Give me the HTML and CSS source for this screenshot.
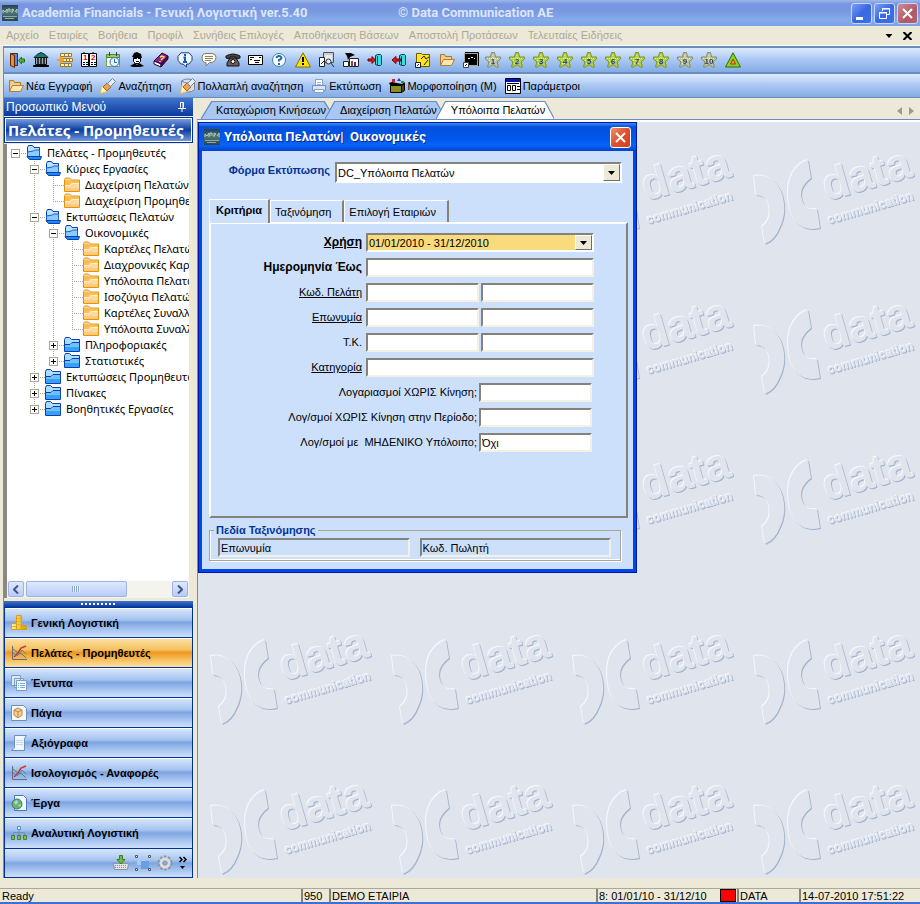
FILE: index.html
```html
<!DOCTYPE html>
<html lang="el">
<head>
    <meta charset="UTF-8">
    <title>Academia Financials</title>
    <link rel="stylesheet" href="styles.css">
</head>
<body>
    <!-- Shared icons -->
    <svg class="defs" aria-hidden="true">
        <linearGradient id="g-app" x2="0" y2="1"><stop offset="0" stop-color="#25434d"/><stop offset=".5" stop-color="#4f7474"/><stop offset="1" stop-color="#2b4247"/></linearGradient>
        <linearGradient id="g-gold"><stop offset="0" stop-color="#fff2a0"/><stop offset=".5" stop-color="#f7c93a"/><stop offset="1" stop-color="#c88a12"/></linearGradient>
        <symbol id="i-app" viewBox="0 0 16 16">
            <path fill="url(#g-app)" d="M0 0h16v16H0z"/>
            <path stroke="#b8ccc8" fill="none" d="M1 8V5l2 2 2-3v4M6 7V4h2v3M10 8V4l2 1-2 2M13 7l2-3v4"/>
            <path stroke="#8fa9a7" fill="none" d="M1 11.500h14M3 13.500h9"/>
        </symbol>
        <symbol id="i-open" viewBox="0 0 16 16">
            <path fill="#b9e2ff" stroke="#0b3fae" d="M1.500 12.500v-10l1-2h4l1.500 2h5.500v9"/>
            <path fill="#8ccbff" stroke="#1c5cd0" d="M1.500 12V7l6-1 1-1h5v7z"/>
            <path fill="#1d8cf0" stroke="#0b3fae" d="M1 11.500h14.500l-1 3H3.500z"/>
        </symbol>
        <symbol id="i-closed" viewBox="0 0 16 16">
            <path fill="#a9dcff" stroke="#0b3fae" d="M.5 14.500v-12l1-2h4l2 2h8v12z"/>
            <path fill="#37a2f7" d="M1 10h14v4H1z"/>
            <path fill="#6fc0fb" d="M1 8h6l1-2h7v4H1z"/>
            <path stroke="#0b3fae" fill="none" d="M1 7.500h5l2-2h7"/>
        </symbol>
        <symbol id="i-leaf" viewBox="0 0 16 16">
            <path fill="#ffd9a0" stroke="#e0930c" d="M.5 14.500v-12l1-1.500h4l2 2h8v11.500z"/>
            <path fill="#ffbb50" d="M1 3h4l3 1h7v2H7L6 8H1z"/>
            <path fill="none" stroke="#fff6c4" d="M1 8.500h5l2-2h7"/>
            <path fill="#ffc978" d="M1 11h14v3H1z"/>
        </symbol>
        <symbol id="i-folder" viewBox="0 0 16 16">
            <path fill="#f2cd84" stroke="#a87830" d="M1.500 13.500v-11h4l1 2h6v3"/>
            <path fill="#fbe5b0" stroke="#b27f35" d="M1.500 13.500l3-6h11l-3 6z"/>
        </symbol>
        <symbol id="i-torch" viewBox="0 0 16 16">
            <path fill="#fff3c0" stroke="#e7b860" d="M.5 15.500l1-8 6 6z"/>
            <path fill="#e9a24e" stroke="#a56a2a" d="M3 9l4-4 4 4-4 4z"/>
            <path fill="#e8ecf4" stroke="#74819c" d="M7.500 5.500l5-5 3 3-5 5z"/>
        </symbol>
        <symbol id="i-star" viewBox="0 0 16 16">
            <path fill="#b5d048" stroke="#7a9426" d="M6.500.500h3l1 4.500h5v2l-3.500 3 1.500 5h-2L8 12.500 4.500 15h-2L4 10 .5 7V5h5z"/>
            <path stroke="#e0ee90" fill="none" stroke-dasharray="1 1" d="M8 3v9M2 6.500h12M4 8.500h8M5 11.500h6"/>
        </symbol>
        <symbol id="i-chart" viewBox="0 0 16 16">
            <path fill="none" stroke="#666c88" d="M1.500 1v13.500H16"/>
            <path fill="none" stroke="#3d9c50" d="M2 4l5 4 4 1 4 4"/>
            <path fill="none" stroke="#d0342c" stroke-width="1.500" d="M3 12l4-4 3-5 5-2"/>
            <path fill="none" stroke="#5582d2" d="M2 8l4 3 5-6 4 4"/>
        </symbol>
        <symbol id="i-arrow" viewBox="0 0 7 4"><path d="M0 0h7L3.500 4z"/></symbol>
    </svg>

    <header class="titlebar">
        <svg class="icon"><use href="#i-app"/></svg>
        <h1>Academia Financials - Γενική Λογιστική ver.5.40</h1>
        <span class="copyright">© Data Communication AE</span>
        <div class="window-buttons">
            <button aria-label="Minimize"><svg viewBox="0 0 19 19"><path fill="#fff" d="M4 13h7v3H4z"/></svg></button>
            <button aria-label="Restore"><svg viewBox="0 0 19 19"><path fill="none" stroke="#fff" d="M7.500 7V4.500h7v6H12M4.500 8.500h7v6h-7z"/><path stroke="#fff" d="M7 5h8M4 9h8"/></svg></button>
            <button class="close" aria-label="Close"><svg viewBox="0 0 19 19"><path stroke="#fff" stroke-width="2" d="M5 5l9 9M14 5l-9 9"/></svg></button>
        </div>
    </header>

    <nav class="menubar">
        <a href="#">Αρχείο</a>
        <a href="#">Εταιρίες</a>
        <a href="#">Βοήθεια</a>
        <a href="#">Προφίλ</a>
        <a href="#">Συνήθεις Επιλογές</a>
        <a href="#">Αποθήκευση Βάσεων</a>
        <a href="#">Αποστολή Προτάσεων</a>
        <a href="#">Τελευταίες Ειδήσεις</a>
        <div class="menu-buttons">
            <button aria-label="Options"><svg width="8" height="4" viewBox="0 0 7 4"><use href="#i-arrow"/></svg></button>
            <button aria-label="Close window"><svg width="9" height="8" viewBox="0 0 9 8"><path stroke="#000" stroke-width="2" d="M.5 0l8 8M8.500 0l-8 8"/></svg></button>
        </div>
    </nav>

    <div class="toolbar">
        <div class="tool-group">
            <button aria-label="Exit"><svg class="icon" viewBox="0 0 16 16"><path fill="#5b88dc" stroke="#642800" d="M1.500 1.500h7v12h-7z"/><path fill="#e09040" stroke="#642800" d="M1.500 1.500l4 2v12l-4-2z"/><path fill="#58b030" stroke="#20701a" d="M15.500 7v3h-3v2l-3-3.500 3-3.500v2z"/></svg></button>
            <button aria-label="Company"><svg class="icon" viewBox="0 0 16 16"><path fill="#157b78" stroke="#00282a" d="M1 5.500l3-3L8 .5l4 2 3 3z"/><path fill="#9aa7b4" stroke="#111" d="M2.500 5.500h11v7h-11z"/><path stroke="#111" stroke-width="1.500" d="M5 6v7M8 6v7M11 6v7"/><path fill="#333" stroke="#000" d="M.5 13.500h15v1H.5z"/></svg></button>
            <button aria-label="Records"><svg class="icon" viewBox="0 0 16 16"><path fill="#fff3b0" stroke="#a07828" d="M3.500 1.500h11v3h-11zM5.500 6.500h10v3h-10zM3.500 11.500h11v3h-11z"/><path stroke="#a07828" d="M7.500 1v3M11.500 1v3M9.500 7v3M12.500 7v3M7.500 12v3M11.500 12v3"/><path stroke="#f0a020" stroke-width="2" d="M0 8h6M3 5l3 3-3 3" fill="none"/></svg></button>
            <button aria-label="Calendar"><svg class="icon" viewBox="0 0 16 16"><path fill="#fff" stroke="#000" d="M.5 1.500h7v13h-7zM8.500 1.500h7v13h-7z"/><text class="glyph red" x="2" y="8">1</text><text class="glyph red" x="10" y="8">2</text><path stroke="#000" stroke-dasharray="2 1" d="M2 10.500h5M2 12.500h5M10 10.500h5M10 12.500h5M3 0v3M12 0v3"/></svg></button>
            <button aria-label="Schedule"><svg class="icon" viewBox="0 0 16 16"><path fill="#fff" stroke="#6da63a" d="M1.500 3.500h13v11h-13z"/><path fill="#9ccc60" stroke="#4b8a2a" d="M1.500 2.500h13v3h-13z"/><path stroke="#345" d="M4.500 0v4M11.500 0v4"/><circle cx="9.500" cy="10" r="4.500" fill="#e6f3ff" stroke="#2c6db4"/><path stroke="#2c6db4" fill="none" d="M9.500 7v3.500H12"/></svg></button>
            <button aria-label="Agent"><svg class="icon" viewBox="0 0 16 16"><path d="M3 5l2-4 3-1 4 2 1 4z"/><path fill="#fff" stroke="#000" d="M4.500 5.500h7v4l-2 2h-3l-2-2z"/><path stroke="#000" d="M5 6.500h3M9 6.500h2M7 9.500h3"/><path d="M1 14l5-3 2 2 2-2 5 3-4 1H4z"/></svg></button>
            <button aria-label="Help book"><svg class="icon" viewBox="0 0 16 16"><path fill="#90208c" stroke="#26002c" d="M1 9l8-8 6 3-7 8z"/><path fill="#fff" stroke="#26002c" d="M1 9v3l7 3v-3z"/><path fill="#5b0b5a" stroke="#26002c" d="M8 12l7-8v3l-7 8z"/><path stroke="#ffe14a" stroke-width="1.500" fill="none" d="M7 5l2-1 2 1-2 2-1 1M7 9v1"/></svg></button>
            <button aria-label="Information"><svg class="icon" viewBox="0 0 16 16"><path fill="#eff6ff" stroke="#25406e" d="M4 .8h8l3 3.500v4L12 12H9.500v3L6 12H4L1 8.300v-4z"/><path fill="none" stroke="#0a5fc0" stroke-width="2" d="M8 2v2M6.500 5.500H8V10M6 10h4"/></svg></button>
            <button aria-label="Comment"><svg class="icon" viewBox="0 0 16 16"><path fill="#fffdf0" stroke="#807d68" d="M5 1.500h6q4 0 4 4t-4 5H8.500L5 14v-3.500q-4 0-4-4.500t4-4.500z"/><path stroke="#8a8770" d="M4 4.500h8M4 6.500h8M4 8.500h6"/></svg></button>
            <button aria-label="Phone"><svg class="icon" viewBox="0 0 16 16"><path fill="#4e433e" stroke="#111" d="M1 6V4q7-4 14 0v2l-4 1V5H5v2z"/><path fill="#6b5d55" stroke="#111" d="M5 6h6l3 5v3H2v-3z"/><circle cx="8" cy="9.500" r="2" fill="#fff" stroke="#111"/></svg></button>
        </div>
        <div class="tool-group">
            <button aria-label="Mail"><svg class="icon" viewBox="0 0 16 16"><path fill="#fff" stroke="#000" d="M1.500 3.500h14v9h-14z"/><path stroke="#000" d="M3 5.500h4M3 7.500h2M7 8.500h6M8 10.500h4M12 5.500h2"/></svg></button>
            <button aria-label="Help"><svg class="icon" viewBox="0 0 16 16"><circle cx="8" cy="8" r="6.500" fill="#f8fcff" stroke="#3f7fb0"/><path fill="none" stroke="#2269a8" stroke-width="2" d="M5.500 6Q6 4 8 4t2.500 2Q10 7.500 8 8v1.500M8 11v2"/></svg></button>
            <button aria-label="Warning"><svg class="icon" viewBox="0 0 16 16"><path fill="#ffe10a" stroke="#8a6a00" d="M8 .8L15.500 15H.5z"/><path stroke="#000" stroke-width="2" d="M8 5v5M8 11v2"/></svg></button>
            <button aria-label="Search window"><svg class="icon" viewBox="0 0 16 16"><path fill="#c8ccd4" stroke="#555" d="M4.500.5h10v10h-10z"/><path fill="#e8eaee" d="M6 3h7v6H6z"/><path fill="#fff" stroke="#222" d="M.5 5.500h5v9h-5z"/><path stroke="#222" d="M2 12l3-3M11 10l4 5"/><circle cx="9.500" cy="9.500" r="2.500" fill="#dcecff" stroke="#333"/></svg></button>
            <button aria-label="Statistics"><svg class="icon" viewBox="0 0 16 16"><path d="M2 1h6l4 2-5 2-2 3-1-4z"/><path fill="#fff" stroke="#222" d="M6.500 6.500h9v8h-9z"/><path stroke="#d03020" stroke-width="2" d="M9 9v5"/><path stroke="#2040d0" stroke-width="2" d="M12 10v4"/><path fill="#fff" stroke="#222" d="M.5 9.500h5v5h-5z"/></svg></button>
            <button aria-label="Import"><svg class="icon" viewBox="0 0 16 16"><path fill="#30e0e8" stroke="#003c40" d="M8.500 3.500l2-1h3l1 1v9l-1 1h-3l-2-1z"/><path stroke="#003c40" d="M10.500 4v9"/><path fill="#e01818" stroke="#700" d="M1 7h4V4.500L8.500 8 5 11.500V9H1z"/></svg></button>
            <button aria-label="Export"><svg class="icon" viewBox="0 0 16 16"><path fill="#30e0e8" stroke="#003c40" d="M8.500 3.500l2-1h3l1 1v9l-1 1h-3l-2-1z"/><path stroke="#003c40" d="M10.500 4v9"/><path fill="#e01818" stroke="#700" d="M10 7H5V4.500L1 8l4 3.500V9h5z"/></svg></button>
            <button aria-label="Notes"><svg class="icon" viewBox="0 0 16 16"><path fill="#ffe320" stroke="#6c5d00" d="M1.500 1.500h5l1 1h7v12h-13z"/><path stroke="#222" fill="none" d="M6 7l3-3 2 3 3-2M9 13l4-5"/><path fill="#fff" stroke="#222" d="M.5 10.500h5v5h-5z"/><path stroke="#222" d="M2 14l2-2"/></svg></button>
            <button aria-label="Open"><svg class="icon"><use href="#i-folder"/></svg></button>
            <button aria-label="Console"><svg class="icon" viewBox="0 0 16 16"><path stroke="#a8a8a8" fill="#000" d="M1.500 1.500h13v12h-13z"/><path stroke="#000" fill="none" d="M2 .5h13.500V14"/><path stroke="#fff" d="M5 6.500h2M8 5.500h2M11 6.500h1"/><path fill="#fff" stroke="#444" d="M.5 10.500h5v5h-5z"/><path stroke="#222" d="M2 14l2-2"/></svg></button>
        </div>
        <div class="tool-group">
            <button aria-label="Favourite 1"><svg class="icon faded" viewBox="0 0 16 16"><use href="#i-star"/><text class="glyph" x="8" y="12">1</text></svg></button>
            <button aria-label="Favourite 2"><svg class="icon" viewBox="0 0 16 16"><use href="#i-star"/><text class="glyph" x="8" y="12">2</text></svg></button>
            <button aria-label="Favourite 3"><svg class="icon" viewBox="0 0 16 16"><use href="#i-star"/><text class="glyph" x="8" y="12">3</text></svg></button>
            <button aria-label="Favourite 4"><svg class="icon" viewBox="0 0 16 16"><use href="#i-star"/><text class="glyph" x="8" y="12">4</text></svg></button>
            <button aria-label="Favourite 5"><svg class="icon" viewBox="0 0 16 16"><use href="#i-star"/><text class="glyph" x="8" y="12">5</text></svg></button>
            <button aria-label="Favourite 6"><svg class="icon" viewBox="0 0 16 16"><use href="#i-star"/><text class="glyph" x="8" y="12">6</text></svg></button>
            <button aria-label="Favourite 7"><svg class="icon" viewBox="0 0 16 16"><use href="#i-star"/><text class="glyph" x="8" y="12">7</text></svg></button>
            <button aria-label="Favourite 8"><svg class="icon" viewBox="0 0 16 16"><use href="#i-star"/><text class="glyph" x="8" y="12">8</text></svg></button>
            <button aria-label="Favourite 9"><svg class="icon faded" viewBox="0 0 16 16"><use href="#i-star"/><text class="glyph" x="8" y="12">9</text></svg></button>
            <button aria-label="Favourite 10"><svg class="icon faded" viewBox="0 0 16 16"><use href="#i-star"/><text class="glyph" x="8" y="12">10</text></svg></button>
            <button aria-label="Alerts"><svg class="icon" viewBox="0 0 16 16"><path fill="#8fd21c" stroke="#2f6a10" d="M8 .8L15.500 15H.5z"/><path fill="#f5a030" stroke="#9c3a10" d="M8 7l2.500 5h-5z"/></svg></button>
        </div>
    </div>

    <div class="toolbar actions">
        <button><svg class="icon"><use href="#i-folder"/></svg>Νέα Εγγραφή</button>
        <button><svg class="icon"><use href="#i-torch"/></svg>Αναζήτηση</button>
        <button><svg class="icon" viewBox="0 0 16 16"><path fill="#d9dde4" stroke="#7d8696" d="M1.500 3q6-4 13 0v9q-6 4-13 0z"/><path stroke="#7d8696" fill="none" d="M1.500 3q6 4 13 0"/><use href="#i-torch"/></svg>Πολλαπλή αναζήτηση</button>
        <button><svg class="icon" viewBox="0 0 16 16"><path fill="#fff" stroke="#7fa0d0" d="M4.500 1.500h7v7h-7z"/><path fill="#d8e4f4" stroke="#6f8fc0" d="M1.500 7.500h13v5h-13z"/><path fill="#fff" stroke="#7fa0d0" d="M3.500 11.500h9v3h-9z"/><path stroke="#9ab4dc" d="M6 4.500h4M6 6.500h4"/></svg>Εκτύπωση</button>
        <button><svg class="icon" viewBox="0 0 16 16"><path fill="#8c8c20" stroke="#000" d="M1.500 7.500h11v7h-11z"/><path fill="#4b4b0c" stroke="#000" d="M12.500 7.500l3-2v7l-3 2z"/><path fill="#000" d="M0 5l3-1 10 2 3-2-1 3H1z"/><path fill="#e02020" d="M3 1h3v3H3z"/><path fill="#2030d0" d="M8 3l2-3 2 3z"/><path fill="#18a030" d="M12 3h3v2h-3z"/></svg>Μορφοποίηση (Μ)</button>
        <button><svg class="icon" viewBox="0 0 16 16"><path fill="#fff" stroke="#000" d="M.5.5h15v15H.5z"/><path fill="#0814b8" d="M1 1h14v3H1z"/><path fill="none" stroke="#000" d="M2.500 7.500h3v5h-3zM7.500 7.500h3v5h-3zM12 8.500h3M12 11.500h3M2 5.500h12"/></svg>Παράμετροι</button>
    </div>

    <div class="main">
        <aside class="sidebar">
            <div class="sidebar-head">
                <span>Προσωπικό Μενού</span>
                <button aria-label="Pin"><svg width="8" height="10" viewBox="0 0 8 10"><path fill="none" stroke="#fff" d="M2.500 5.500v-5h3v5M0 6.500h8M4 6.500V10M5 1v5"/></svg></button>
            </div>
            <h2>Πελάτες - Προμηθευτές</h2>

            <div class="tree-frame">
                <ul class="tree">
                    <li>
                        <div class="node"><span class="joint"><button class="toggle" aria-label="Collapse"></button></span><svg class="icon"><use href="#i-open"/></svg><a href="#">Πελάτες - Προμηθευτές</a></div>
                        <ul>
                            <li>
                                <div class="node"><span class="joint"><button class="toggle" aria-label="Collapse"></button></span><svg class="icon"><use href="#i-open"/></svg><a href="#">Κύριες Εργασίες</a></div>
                                <ul>
                                    <li><div class="node"><span class="joint"></span><svg class="icon"><use href="#i-leaf"/></svg><a href="#">Διαχείριση Πελατών</a></div></li>
                                    <li><div class="node"><span class="joint"></span><svg class="icon"><use href="#i-leaf"/></svg><a href="#">Διαχείριση Προμηθευτών</a></div></li>
                                </ul>
                            </li>
                            <li>
                                <div class="node"><span class="joint"><button class="toggle" aria-label="Collapse"></button></span><svg class="icon"><use href="#i-open"/></svg><a href="#">Εκτυπώσεις Πελατών</a></div>
                                <ul>
                                    <li>
                                        <div class="node"><span class="joint"><button class="toggle" aria-label="Collapse"></button></span><svg class="icon"><use href="#i-open"/></svg><a href="#">Οικονομικές</a></div>
                                        <ul>
                                            <li><div class="node"><span class="joint"></span><svg class="icon"><use href="#i-leaf"/></svg><a href="#">Καρτέλες Πελατών</a></div></li>
                                            <li><div class="node"><span class="joint"></span><svg class="icon"><use href="#i-leaf"/></svg><a href="#">Διαχρονικές Καρτέλες</a></div></li>
                                            <li><div class="node"><span class="joint"></span><svg class="icon"><use href="#i-leaf"/></svg><a href="#">Υπόλοιπα Πελατών</a></div></li>
                                            <li><div class="node"><span class="joint"></span><svg class="icon"><use href="#i-leaf"/></svg><a href="#">Ισοζύγια Πελατών</a></div></li>
                                            <li><div class="node"><span class="joint"></span><svg class="icon"><use href="#i-leaf"/></svg><a href="#">Καρτέλες Συναλλασσομένων</a></div></li>
                                            <li><div class="node"><span class="joint"></span><svg class="icon"><use href="#i-leaf"/></svg><a href="#">Υπόλοιπα Συναλλασσομένων</a></div></li>
                                        </ul>
                                    </li>
                                    <li><div class="node"><span class="joint"><button class="toggle plus" aria-label="Expand"></button></span><svg class="icon"><use href="#i-closed"/></svg><a href="#">Πληροφοριακές</a></div></li>
                                    <li><div class="node"><span class="joint"><button class="toggle plus" aria-label="Expand"></button></span><svg class="icon"><use href="#i-closed"/></svg><a href="#">Στατιστικές</a></div></li>
                                </ul>
                            </li>
                            <li><div class="node"><span class="joint"><button class="toggle plus" aria-label="Expand"></button></span><svg class="icon"><use href="#i-closed"/></svg><a href="#">Εκτυπώσεις Προμηθευτών</a></div></li>
                            <li><div class="node"><span class="joint"><button class="toggle plus" aria-label="Expand"></button></span><svg class="icon"><use href="#i-closed"/></svg><a href="#">Πίνακες</a></div></li>
                            <li><div class="node"><span class="joint"><button class="toggle plus" aria-label="Expand"></button></span><svg class="icon"><use href="#i-closed"/></svg><a href="#">Βοηθητικές Εργασίες</a></div></li>
                        </ul>
                    </li>
                </ul>
                <div class="scrollbar">
                    <button aria-label="Scroll left"><svg width="6" height="9" viewBox="0 0 6 9"><path fill="none" stroke="#3f5685" stroke-width="2" d="M5 .5l-4 4 4 4"/></svg></button>
                    <div class="thumb"></div>
                    <button aria-label="Scroll right"><svg width="6" height="9" viewBox="0 0 6 9"><path fill="none" stroke="#3f5685" stroke-width="2" d="M1 .5l4 4-4 4"/></svg></button>
                </div>
            </div>

            <div class="splitter"></div>
            <nav class="modules">
                <button><svg class="icon" viewBox="0 0 16 16"><path fill="url(#g-gold)" stroke="#d8a018" d="M5.500.5h5v14h-5zM.5 8.500h5v6h-5zM10.500 10.500h5v4h-5z"/><path stroke="#e8b428" d="M6 3.500h4M6 6.500h4M6 9.500h4M11 12.500h4M1 11.500h4"/></svg>Γενική Λογιστική</button>
                <button class="active"><svg class="icon"><use href="#i-chart"/></svg>Πελάτες - Προμηθευτές</button>
                <button><svg class="icon" viewBox="0 0 16 16"><path fill="#dceaf8" stroke="#7b9cc4" d="M.5.5h9v10h-9zM3.500 3.500h9v9h-9z"/><path fill="#f4f9ff" stroke="#7b9cc4" d="M5.500 5.500h10v10h-10z"/><path stroke="#7faede" d="M9 8.500h5M9 10.500h5M9 12.500h5M7 8.500h1M7 10.500h1M7 12.500h1"/></svg>Έντυπα</button>
                <button><svg class="icon" viewBox="0 0 16 16"><path fill="#f4f8fc" stroke="#6e8fb8" d="M.5.5h12l3 3v12H.5z"/><path fill="#f3cf94" stroke="#bb8a44" d="M3 5l4-2 4 2v5l-4 3-4-3z"/><path stroke="#bb8a44" fill="none" d="M3 5l4 2 4-2M7 7v6"/></svg>Πάγια</button>
                <button><svg class="icon" viewBox="0 0 16 16"><path fill="#f2f8ff" stroke="#6e8fb8" d="M3.500.5h12l-2 3v12H.5q2-1 3-3z"/><path stroke="#c2d8f0" d="M5 5.500h7M5 7.500h7M5 9.500h7"/></svg>Αξιόγραφα</button>
                <button><svg class="icon"><use href="#i-chart"/></svg>Ισολογισμός - Αναφορές</button>
                <button><svg class="icon" viewBox="0 0 16 16"><path fill="#f2f8ff" stroke="#4a78b8" d="M3.500.5h9l3 3v12h-12z"/><circle cx="6" cy="9" r="5" fill="#6db46a" stroke="#3f7d6a"/><path fill="#a6d8f0" d="M3 7l3-2 1 2-2 3zM7 10l3-1-1 3z"/></svg>Έργα</button>
                <button><svg class="icon" viewBox="0 0 16 16"><path fill="#dcecff" stroke="#5a8cd0" d="M6.500 1.500h3v3h-3z"/><path fill="none" stroke="#7d8ea8" d="M8 5v5M2.500 10V7.500h11V10"/><path fill="#78bd5c" stroke="#3e8436" d="M.5 10.500h3v4h-3zM6.500 10.500h3v4h-3zM12.500 10.500h3v4h-3z"/></svg>Αναλυτική Λογιστική</button>
            </nav>
            <div class="module-footer">
                <button aria-label="Import data"><svg class="icon" viewBox="0 0 16 16"><path fill="#e4e4e4" stroke="#8e929a" d="M.5 8.500h15l-1 6h-13z"/><path stroke="#8e929a" stroke-dasharray="1 1" d="M2 10.500h12M2 12.500h12"/><path fill="#6cbd3c" stroke="#39801c" d="M6.500.5h3v4h2.500L8 9 4 4.500h2.500z"/></svg></button>
                <button aria-label="Arrange"><svg class="icon" viewBox="0 0 16 16"><path fill="#a8ccf6" d="M2 2h8v8H2z"/><path fill="#6c9ee6" d="M6 6h8v8H6z"/><path fill="#fff" stroke="#555" d="M.5.5h2v2h-2zM13.500.5h2v2h-2zM.5 13.500h2v2h-2zM13.500 13.500h2v2h-2z"/></svg></button>
                <button aria-label="Settings"><svg class="icon" viewBox="0 0 16 16"><circle cx="8" cy="8" r="6.500" fill="none" stroke="#8e9298" stroke-width="2" stroke-dasharray="2.500 1.600"/><circle cx="8" cy="8" r="4" fill="none" stroke="#d9dcdf" stroke-width="3"/><circle cx="8" cy="8" r="2" fill="#8cade2" stroke="#8e9298"/></svg></button>
                <button class="more" aria-label="More"><svg width="8" height="14" viewBox="0 0 8 14"><path fill="none" stroke="#000" stroke-width="1.500" d="M.5 1l2.500 2.500L.5 6M4.500 1L7 3.500 4.500 6"/><path d="M1 10h5l-2.500 3z"/></svg></button>
            </div>
        </aside>

        <main class="workspace">
            <div class="doc-tabs">
                <button><svg viewBox="0 0 100 18" preserveAspectRatio="none"><path d="M0 18L8 .5h84L100 18"/></svg><span>Καταχώριση Κινήσεων</span></button>
                <button><svg viewBox="0 0 100 18" preserveAspectRatio="none"><path d="M0 18L8 .5h84L100 18"/></svg><span>Διαχείριση Πελατών</span></button>
                <button class="active"><svg viewBox="0 0 100 18" preserveAspectRatio="none"><path d="M0 18L8 .5h84L100 18"/></svg><span>Υπόλοιπα Πελατών</span></button>
                <div class="tab-scroll">
                    <button aria-label="Previous tab"><svg width="5" height="8" viewBox="0 0 5 8"><path d="M5 0v8L0 4z"/></svg></button>
                    <button aria-label="Next tab"><svg width="5" height="8" viewBox="0 0 5 8"><path d="M0 0v8l5-4z"/></svg></button>
                </div>
            </div>

            <div class="desktop">
                <svg class="wallpaper" aria-hidden="true">
                    <defs>
                        <g id="logo" class="emboss">
                            <path d="M13 54Q31 51 40 69Q47 88 39 105Q34 118 24 122L21 105Q31 97 28 84Q25 73 15 73z"/>
                            <path d="M67 38L70 56Q57 66 61 78Q64 89 76 87L79 106Q56 111 49 88Q43 60 55 46Q61 39 67 38z"/>
                            <text class="logo-big" transform="translate(86 79) rotate(-16)">data</text>
                            <text class="logo-small" transform="translate(88 102) rotate(-16)">communication</text>
                        </g>
                        <pattern id="tiles" width="181" height="150" patternUnits="userSpaceOnUse"><use href="#logo"/></pattern>
                    </defs>
                    <rect width="100%" height="480" fill="url(#tiles)"/>
                    <rect class="lower" width="100%" height="2000" fill="url(#tiles)"/>
                </svg>

                <section class="dialog">
                    <header class="dialog-title">
                        <svg class="icon"><use href="#i-app"/></svg>
                        <h3>Υπόλοιπα Πελατών|&nbsp; Οικονομικές</h3>
                        <button aria-label="Close"><svg viewBox="0 0 19 19"><path stroke="#fff" stroke-width="2" d="M5 5l9 9M14 5l-9 9"/></svg></button>
                    </header>
                    <form class="dialog-body">
                        <div class="print-form">
                            <label for="print-form">Φόρμα Εκτύπωσης</label>
                            <span class="combo">
                                <select id="print-form"><option>DC_Υπόλοιπα Πελατών</option></select>
                                <svg viewBox="-4 -6 15 15"><use href="#i-arrow" width="7" height="4"/></svg>
                            </span>
                        </div>

                        <div class="tabs">
                            <button type="button" class="active">Κριτήρια</button>
                            <button type="button">Ταξινόμηση</button>
                            <button type="button">Επιλογή Εταιριών</button>
                        </div>
                        <div class="panel">
                            <div class="field strong">
                                <label class="link" for="period">Χρήση</label>
                                <span class="combo gold">
                                    <select id="period"><option>01/01/2010 - 31/12/2010</option></select>
                                    <svg viewBox="-4 -5 15 13"><use href="#i-arrow" width="7" height="4"/></svg>
                                </span>
                            </div>
                            <div class="field strong"><label for="until">Ημερομηνία Έως</label><input type="text" id="until"></div>
                            <div class="field"><label class="link" for="code">Κωδ. Πελάτη</label><input type="text" id="code"><input type="text" aria-label="Κωδ. Πελάτη έως"></div>
                            <div class="field"><label class="link" for="name">Επωνυμία</label><input type="text" id="name"><input type="text" aria-label="Επωνυμία έως"></div>
                            <div class="field"><label for="zip">Τ.Κ.</label><input type="text" id="zip"><input type="text" aria-label="Τ.Κ. έως"></div>
                            <div class="field"><label class="link" for="category">Κατηγορία</label><input type="text" id="category"></div>
                            <div class="field wide"><label for="idle">Λογαριασμοί ΧΩΡΙΣ Κίνηση;</label><input type="text" id="idle"></div>
                            <div class="field wide"><label for="idle-period">Λογ/σμοί ΧΩΡΙΣ Κίνηση στην Περίοδο;</label><input type="text" id="idle-period"></div>
                            <div class="field wide"><label for="zero">Λογ/σμοί με &nbsp;ΜΗΔΕΝΙΚΟ Υπόλοιπο;</label><input type="text" id="zero" value="Όχι"></div>
                        </div>

                        <fieldset>
                            <legend>Πεδία Ταξινόμησης</legend>
                            <input type="text" value="Επωνυμία" aria-label="Πρώτο πεδίο" readonly>
                            <input type="text" value="Κωδ. Πωλητή" aria-label="Δεύτερο πεδίο" readonly>
                        </fieldset>
                    </form>
                </section>
            </div>
        </main>
    </div>

    <footer class="statusbar">
        <span class="ready">Ready</span>
        <span class="code">950</span>
        <span class="company">DEMO ΕΤΑΙΡΙΑ</span>
        <span class="range">8: 01/01/10 - 31/12/10</span>
        <span class="flag"></span>
        <span class="source">DATA</span>
        <span class="clock">14-07-2010 17:51:22</span>
    </footer>
</body>
</html>
```
FILE: styles.css
```css
:root {
    --beige: #ece9d8;
    --line: #6a8cc0;
    --navy: #003399;
    --dialog: #cce0fc;
    --ui: "Liberation Sans", Arial, sans-serif;
    --caption: Roboto, "Liberation Sans", sans-serif;
}

* {
    box-sizing: border-box;
}

body {
    margin: 0;
    min-height: 100vh;
    display: flex;
    flex-direction: column;
    background: var(--beige);
    color: #000;
    font: 11px/16px var(--ui);
    overflow: hidden;
}

button, input, select {
    font: inherit;
    color: inherit;
    margin: 0;
    padding: 0;
    border: none;
    border-radius: 0;
    background: none;
}

a {
    color: inherit;
    text-decoration: none;
}

h1, h2, h3, ul {
    margin: 0;
    padding: 0;
}

svg {
    display: block;
}

.defs {
    position: absolute;
    width: 0;
    height: 0;
}

.icon {
    width: 16px;
    height: 16px;
    flex: none;
}

.glyph {
    font: bold 8px var(--ui);
    fill: #25407c;
    text-anchor: middle;
}

.glyph.red {
    fill: #e00000;
    text-anchor: start;
}

/* Title bar and menu */
.titlebar {
    display: flex;
    align-items: center;
    height: 26px;
    padding: 0 2px;
    background: linear-gradient(#9db9eb 0, #7795e0 4px, #7b99e2 12px, #84acea 20px, #7ba0e4);
    color: #dce6fa;
    font: bold 13px/20px var(--caption);
}

.titlebar h1 {
    font: inherit;
    margin-left: 4px;
    width: 376px;
    white-space: nowrap;
}

.window-buttons {
    display: flex;
    gap: 2px;
    margin-left: auto;
}

.window-buttons button, .dialog-title button {
    width: 21px;
    height: 21px;
    border: 1px solid #c8d6f8;
    border-radius: 3px;
    background: linear-gradient(135deg, #7aa0f4, #3a68e4 50%, #3c70ea);
}

.window-buttons .close {
    background: linear-gradient(135deg, #d08c94, #b05a68 60%, #b8606c);
}

.menubar {
    display: flex;
    gap: 10px;
    height: 20px;
    padding: 1px 8px 0 6px;
    color: #aca899;
    border-bottom: 1px solid #fff;
}

.menu-buttons {
    display: flex;
    gap: 10px;
    margin-left: auto;
}

/* Toolbars */
.toolbar {
    display: flex;
    align-items: center;
    height: 26px;
    margin-left: 3px;
    padding-left: 1px;
    border-top: 2px solid var(--line);
    border-left: 1px solid var(--line);
    background: linear-gradient(#dcebfe, #a9c7f3 50%, #85ace4);
}

.tool-group {
    display: flex;
}

.tool-group + .tool-group {
    margin-left: -2px;
}

.tool-group button {
    width: 24px;
    height: 24px;
    padding: 0 4px;
}

.faded {
    filter: grayscale(.7);
}

.actions {
    gap: 8px;
    padding-left: 4px;
    border-bottom: 1px solid var(--line);
}

.actions button {
    display: flex;
    align-items: center;
    gap: 2px;
    white-space: nowrap;
}

/* Sidebar */
.main {
    flex: 1;
    display: flex;
    gap: 4px;
    padding: 0 0 10px 3px;
}

.sidebar {
    width: 190px;
    flex: none;
    display: flex;
    flex-direction: column;
    border-left: 1px solid var(--line);
}

.sidebar-head {
    display: flex;
    justify-content: space-between;
    align-items: center;
    height: 18px;
    padding: 0 7px 0 2px;
    background: linear-gradient(#3f74cc, #0a3a9c);
    color: #fff;
    font-size: 12px;
}

.sidebar h2 {
    height: 26px;
    margin: 1px 0;
    padding-left: 3px;
    border: 1px solid var(--navy);
    outline: 1px solid #fff;
    outline-offset: -2px;
    background: linear-gradient(#7fa5e6, #0c3c9e 50%, #7da2e2);
    color: #fff;
    font: bold 15px/24px "Open Sans", "Noto Sans", sans-serif;
    white-space: nowrap;
    overflow: hidden;
}

.tree-frame {
    flex: 1;
    display: flex;
    flex-direction: column;
    min-height: 200px;
    margin-right: 4px;
    border-left: 3px solid #8c8a80;
    background: #fff;
}

.tree {
    flex: 1;
    padding-top: 1px;
    overflow: hidden;
}

.tree, .tree ul {
    list-style: none;
}

.tree ul {
    padding-left: 19px;
}

.tree ul > li {
    background: repeating-linear-gradient(#a8a594 0 1px, transparent 1px 2px) 8px 0 / 1px 100% no-repeat;
}

.tree ul > li:last-child {
    background-size: 1px 9px;
}

.node {
    display: flex;
    align-items: center;
    height: 16px;
    font-family: "Noto Sans", sans-serif;
    white-space: nowrap;
}

.joint {
    width: 19px;
    height: 16px;
    flex: none;
    padding: 4px;
    background: repeating-linear-gradient(90deg, #a8a594 0 1px, transparent 1px 2px) 8px 8px / 11px 1px no-repeat;
}

.toggle {
    display: block;
    width: 9px;
    height: 9px;
    border: 1px solid #a8a594;
    background: linear-gradient(#000, #000) center / 5px 1px no-repeat #fff;
}

.toggle.plus {
    background: linear-gradient(#000, #000) center / 5px 1px no-repeat, linear-gradient(#000, #000) center / 1px 5px no-repeat #fff;
}

.node a {
    margin-left: 5px;
}

.scrollbar {
    display: flex;
    height: 17px;
    padding: 0 1px;
    gap: 2px;
    background: #f4f3ee;
}

.scrollbar button, .thumb {
    width: 16px;
    height: 16px;
    display: flex;
    align-items: center;
    justify-content: center;
    border: 1px solid #9db4e8;
    border-radius: 2px;
    background: linear-gradient(#dfe8fe, #b8ccfa);
}

.thumb {
    width: 56%;
}

.thumb::after {
    content: "";
    width: 8px;
    height: 6px;
    background: repeating-linear-gradient(90deg, #8ba6e2 0 1px, #eef3ff 1px 2px);
}

.scrollbar button:last-child {
    margin-left: auto;
}

.splitter {
    height: 6px;
    margin-top: 3px;
    background:
        repeating-linear-gradient(90deg, #fff 0 2px, transparent 2px 4px) center / 35px 2px no-repeat,
        linear-gradient(#3f74cc, #0a3a9c);
}

.modules, .module-footer {
    border: solid var(--navy);
    border-width: 1px 1px 0;
}

.modules button, .module-footer {
    display: flex;
    align-items: center;
    height: 30px;
    background: linear-gradient(#d8e8fd, #a6c4f0 40%, #7fa5e0 50%, #a6c4f0 75%, #cfe1fb);
}

.modules button {
    width: 100%;
    gap: 4px;
    padding-left: 6px;
    border-bottom: 1px solid var(--navy);
    box-shadow: inset 0 1px #fff;
    font-weight: bold;
}

.modules button:last-child {
    border-bottom: none;
}

.modules .active {
    background: linear-gradient(#fce3a8, #f6c060 40%, #ee9820 50%, #f6c060 75%, #fce0a0);
}

.module-footer {
    justify-content: flex-end;
    gap: 6px;
    padding-right: 5px;
    border-bottom-width: 1px;
}

/* Workspace */
.workspace {
    flex: 1;
    min-width: 0;
    display: flex;
    flex-direction: column;
}

.doc-tabs {
    display: flex;
    align-items: flex-end;
    height: 22px;
    padding-left: 4px;
    border-bottom: 1px solid var(--line);
}

.doc-tabs > button {
    position: relative;
    height: 18px;
    margin-right: -10px;
    padding: 0 9px 0 15px;
    line-height: 18px;
    white-space: nowrap;
}

.doc-tabs > button svg {
    position: absolute;
    top: 0;
    left: 0;
    width: 100%;
    height: 100%;
    fill: #a9c7f3;
    stroke: var(--line);
}

.doc-tabs > .active svg {
    fill: #fff;
}

.doc-tabs span {
    position: relative;
}

.tab-scroll {
    display: flex;
    gap: 7px;
    margin-left: auto;
    padding: 0 6px 4px;
    fill: #9a9a92;
}

.desktop {
    position: relative;
    flex: 1;
    border-top: 2px solid #fff;
    border-left: 1px solid var(--line);
    background: #e0e4ed;
    overflow: hidden;
}

.wallpaper {
    position: absolute;
    width: 100%;
    height: 100%;
}

.wallpaper .lower {
    transform: translateY(480px);
}

.emboss {
    fill: #e0e4ed;
    filter: drop-shadow(-1px -1px 0 #f6f8fc) drop-shadow(1px 1px 0 #a3b2cd);
}

.logo-big {
    font: bold 44px var(--ui);
}

.logo-small {
    font: bold 12px var(--ui);
}

/* Dialog window */
.dialog {
    position: absolute;
    top: 0;
    left: 0;
    width: 439px;
    border: 1px solid #0019a0;
    background: #0046e8;
    padding: 0 3px 3px;
}

.dialog-title {
    display: flex;
    align-items: center;
    height: 28px;
    margin: 0 -3px;
    padding: 0 5px;
    background: linear-gradient(#3c8cf8, #0450dc 4px, #0058ee 16px, #0664fa 22px, #0044c8);
    color: #fff;
}

.dialog-title h3 {
    margin-left: 4px;
    font: bold 13px/20px var(--caption);
    text-shadow: 1px 1px #0a2a80;
}

.dialog-title button {
    margin-left: auto;
    border-color: #fff;
    background: linear-gradient(135deg, #f0906c, #e0502c 50%, #d44018);
}

.dialog-body {
    padding: 11px 5px 8px 7px;
    background: var(--dialog);
}

.print-form {
    display: flex;
    gap: 5px;
    padding-right: 6px;
}

.print-form label {
    width: 121px;
    text-align: right;
    white-space: nowrap;
    font-weight: bold;
    color: var(--navy);
}

.combo {
    flex: 1;
    display: flex;
    height: 21px;
    border: 2px solid;
    border-color: #84827a #fff #fff #84827a;
    background: #fff;
}

.combo select {
    flex: 1;
    appearance: none;
    outline: none;
    padding-left: 1px;
}

.combo svg {
    width: 17px;
    border: 1px solid;
    border-color: #fff #716f64 #716f64 #fff;
    background: var(--beige);
}

.combo.gold {
    height: 19px;
    background: #f9da7c;
}

.tabs {
    display: flex;
    align-items: flex-end;
    margin-top: 16px;
}

.tabs button {
    height: 22px;
    padding: 0 11px 0 4px;
    border: solid;
    border-width: 1px 2px 0 1px;
    border-color: #fff #84827a #fff #fff;
}

.tabs .active {
    position: relative;
    height: 24px;
    margin-bottom: -1px;
    padding: 0 6px 3px;
    background: var(--dialog);
    font-weight: bold;
}

.panel {
    display: flex;
    flex-direction: column;
    gap: 6px;
    min-height: 296px;
    padding: 9px 32px 0 0;
    border: 2px solid;
    border-color: #fff #84827a #84827a #fff;
}

.field {
    display: flex;
    gap: 2px;
    height: 19px;
}

.field label {
    width: 151px;
    margin-right: 2px;
    line-height: 19px;
    text-align: right;
    white-space: nowrap;
}

.field.wide label {
    width: 266px;
    margin-right: 0;
}

.field.wide input {
    flex: none;
    width: 113px;
}

.field.strong label {
    font-weight: bold;
    font-size: 12px;
}

.link {
    text-decoration: underline;
}

.field input, fieldset input {
    flex: 1;
    min-width: 0;
    height: 19px;
    padding: 0 1px;
    border: 2px solid;
    border-color: #84827a #f4f1e4 #f4f1e4 #84827a;
    background: #fff;
}

fieldset {
    display: flex;
    gap: 10px;
    margin: 4px 7px 0 0;
    padding: 0 9px 3px 8px;
    border: 1px solid #a8a594;
    box-shadow: inset 1px -1px #fff, 1px 1px #fff;
}

legend {
    margin-left: -4px;
    padding: 0 2px;
    font-weight: bold;
    color: var(--navy);
}

fieldset input {
    background: var(--dialog);
}

/* Status bar */
.statusbar {
    display: flex;
    height: 16px;
    border-top: 1px solid #aca899;
    border-bottom: 2px solid #3a70d8;
    line-height: 14px;
    white-space: nowrap;
}

.statusbar span {
    flex: none;
    padding-left: 1px;
    border-left: 2px solid #84827a;
}

.statusbar .ready {
    width: 301px;
    border-left: none;
    padding-left: 2px;
}

.statusbar .code {
    width: 28px;
}

.statusbar .company {
    flex: 1;
}

.statusbar .range {
    width: 124px;
}

.statusbar .flag {
    width: 16px;
    margin-right: 1px;
    border: 1px solid #000;
    background: #f00;
}

.statusbar .source {
    width: 62px;
}

.statusbar .clock {
    width: 121px;
}
```
